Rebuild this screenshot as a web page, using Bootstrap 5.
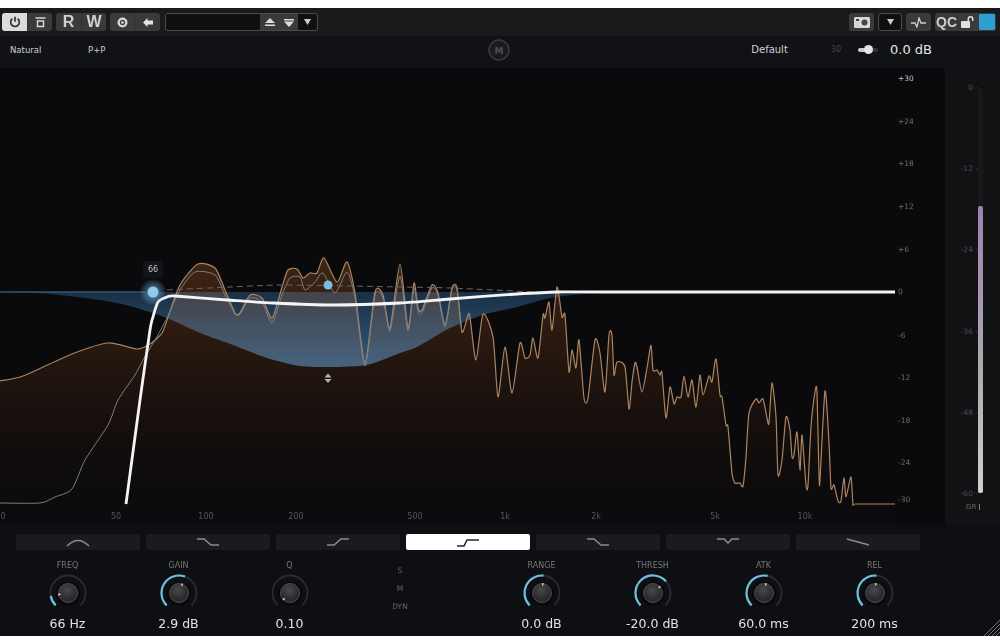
<!DOCTYPE html>
<html lang="en">
<head>
  <meta charset="UTF-8" />
  <title>Dynamic EQ</title>
  <link href="https://cdn.jsdelivr.net/npm/bootstrap@5.3.3/dist/css/bootstrap.min.css" rel="stylesheet" />
  <style>
    html, body { height: 100%; background: #fff; overflow: hidden; }
    body { font-family: "DejaVu Sans", sans-serif; }
    .plugin { margin-top: 8px; height: 628px; background: #0e0f12; position: relative; overflow: hidden; }

    /* top toolbar */
    .tool-bar { height: 28px; background: #1a1a1c; padding: 5px 4px 0 2px; }
    .tool-group { display: flex; height: 18px; border-radius: 3px; background: #3a3a3d; overflow: hidden; }
    .tool-btn { width: 25px; height: 18px; padding: 0; border: 0; border-radius: 0; background: transparent; color: #d0d0d0; display: flex; align-items: center; justify-content: center; font: 700 16px "Liberation Sans", sans-serif; }
    .tool-btn.is-on { background: #dcdcdc; color: #333; }
    .tool-btn + .tool-btn { border-left: 1px solid #333336; }
    .tool-btn.qc-text { width: 23px; font-size: 14px; }
    .tool-btn.qc-lock { width: 18px; }
    .preset-box { display: flex; width: 153px; height: 18px; margin-left: 5px; border: 1px solid #4a4a4c; border-radius: 3px; background: #3a3a3d; overflow: hidden; }
    .preset-name { width: 95px; background: #101012; }
    .preset-box .tool-btn { width: 19px; height: 16px; border: 0; }
    .preset-box .tool-drop { background: #101012; color: #ccc; }
    .drop-box { width: 24px; height: 18px; border: 1px solid #4a4a4c; border-radius: 3px; background: #101012; display: flex; align-items: center; justify-content: center; }
    .qc-chip { width: 16px; height: 16px; margin: 1px 1px 1px 3px; background: #2d9fd0; border-radius: 1px; }

    /* second bar */
    .sub-bar { height: 32px; padding-bottom: 4px; background: #111215; color: #d0d0d0; font-size: 8.5px; line-height: 12px; position: relative; }
    .sub-natural { margin-left: 10px; width: 78px; }
    .sub-badge { position: absolute; left: 488px; top: 3px; }
    .sub-default { font-size: 10px; margin-right: 43px; }
    .sub-range { color: #464648; font-size: 8px; margin-right: 17px; }
    .gain-slider { width: 20px; height: 4px; margin-right: 12px; border-radius: 2px; background: linear-gradient(90deg, #ccc 60%, #333 60%); position: relative; }
    .gain-thumb { position: absolute; left: 6px; top: -3px; width: 9px; height: 9px; border-radius: 50%; background: #e4e4e4; }
    .sub-gain { font-size: 13px; margin-right: 68px; color: #e4e4e4; }

    /* graph and meter */
    .graph-svg { display: block; width: 945px; height: 457px; background: #0a0a0d; }
    .soft-line { filter: blur(.3px); }
    .db-label { font-size: 7.5px; fill: #6c6c70; }
    .freq-label { font-size: 8px; fill: #55555a; text-anchor: middle; }
    .gr-meter { width: 55px; height: 457px; background: #111214; }
    .gr-scale { width: 33px; height: 416px; margin-top: 15px; color: #4c4c50; font-size: 7.5px; line-height: 10px; text-align: right; }
    .gr-track { width: 5px; height: 405px; margin-top: 20px; background: #18191b; display: flex; align-items: flex-end; }
    .gr-fill { width: 100%; border-radius: 2px; background: linear-gradient(180deg, #9a84ad 0%, #a898b5 35%, #aaaaaa 55%, #d0d0d0 100%); }
    .gr-name { position: absolute; left: 966px; top: 494px; font-size: 7px; color: #6a6a6e; }
    .gr-mark { position: absolute; left: 979px; top: 496px; width: 1px; height: 6px; background: #a5703c; }

    /* filter type tabs */
    .band-row { gap: 6px; padding: 9px 0 0 16px; }
    .band-tab { width: 124px; height: 16px; padding: 0; border: 0; border-radius: 2px; background: #1a1b1f; display: flex; align-items: center; justify-content: center; }
    .band-tab svg { stroke: #8c8c90; }
    .band-tab.is-on { background: #fff; }
    .band-tab.is-on svg { stroke: #222; }

    /* knobs */
    .knob-row { padding: 11px 0 0 12px; }
    .knob-cell { width: 111px; text-align: center; }
    .knob-name { font-size: 8px; line-height: 10px; color: #77777b; }
    .knob-dial { display: block; margin: 2px auto 0; }
    .knob-value { font-size: 12.5px; line-height: 16px; color: #e2e2e2; margin-top: 3px; }
    .mode-col { width: 110px; margin-right: 31px; padding-top: 1px; text-align: center; font-size: 7.5px; line-height: 18px; color: #66666a; }
    .size-grip { position: absolute; right: 0; bottom: 0; }
  </style>
</head>
<body>
  <div class="plugin">

    <!-- Toolbar -->
    <div class="tool-bar d-flex align-items-start">
      <div class="tool-group">
        <button class="btn tool-btn is-on"><svg width="12" height="12" viewBox="0 0 12 12" fill="none" stroke="#333" stroke-width="1.7"><path d="M3.4 2.8a4.3 4.3 0 1 0 5.2 0M6 .8v5"/></svg></button>
        <button class="btn tool-btn"><svg width="11" height="11" viewBox="0 0 11 11" fill="none" stroke="#d8d8d8" stroke-width="1.5"><path d="M.5 1h10M2.500 4h6v5.500h-6z"/></svg></button>
      </div>
      <div class="tool-group ms-1">
        <button class="btn tool-btn">R</button>
        <button class="btn tool-btn">W</button>
      </div>
      <div class="tool-group ms-1">
        <button class="btn tool-btn"><svg width="11" height="11" viewBox="0 0 11 11"><circle cx="5.500" cy="5.500" r="5" fill="#d8d8d8"/><circle cx="5.500" cy="5.500" r="2" fill="none" stroke="#444" stroke-width="1.300"/></svg></button>
        <button class="btn tool-btn"><svg width="10" height="9" viewBox="0 0 10 9" fill="#e4e4e4"><path d="M0 4.500 4.500 0v2.500H10v4H4.500V9z"/></svg></button>
      </div>
      <div class="preset-box">
        <div class="preset-name"></div>
        <button class="btn tool-btn"><svg width="10" height="9" viewBox="0 0 10 9" fill="#ddd"><path d="M5 0l5 5H0zM0 6.500h10V8H0z"/></svg></button>
        <button class="btn tool-btn"><svg width="10" height="9" viewBox="0 0 10 9" fill="#ddd"><path d="M0 1h10V2.500H0zM0 3.500h10L5 9z"/></svg></button>
        <button class="btn tool-btn tool-drop"><svg width="7" height="6" viewBox="0 0 7 6" fill="#ccc"><path d="M0 0h7L3.500 6z"/></svg></button>
      </div>
      <div class="ms-auto d-flex">
        <div class="tool-group"><button class="btn tool-btn"><svg width="16" height="11" viewBox="0 0 16 11"><rect width="16" height="11" rx="1.500" fill="#d8d8d8"/><circle cx="10.500" cy="5.500" r="3" fill="#444"/><rect x="2" y="2" width="3" height="2" fill="#444"/></svg></button></div>
        <div class="drop-box ms-1"><svg width="7" height="6" viewBox="0 0 7 6" fill="#ccc"><path d="M0 0h7L3.500 6z"/></svg></div>
        <div class="tool-group ms-1"><button class="btn tool-btn"><svg width="15" height="11" viewBox="0 0 15 11" fill="none" stroke="#d0d0d0" stroke-width="1.300"><path d="M0 6h4l2 4 2-9 2 5h5"/></svg></button></div>
        <div class="tool-group ms-1">
          <button class="btn tool-btn qc-text">QC</button>
          <button class="btn tool-btn qc-lock"><svg width="14" height="12" viewBox="0 0 14 12" fill="#e0e0e0"><rect y="5" width="9" height="7" rx="1"/><path d="M6.500 5V3a3 3 0 0 1 6 0v2h-1.500V3a1.500 1.500 0 0 0-3 0v2z"/></svg></button>
          <div class="qc-chip"></div>
        </div>
      </div>
    </div>

    <!-- Second bar -->
    <div class="sub-bar d-flex align-items-center">
      <span class="sub-natural">Natural</span>
      <span>P+P</span>
      <svg class="sub-badge" width="22" height="22" viewBox="0 0 22 22"><circle cx="11" cy="11" r="10" fill="#1a1b1e" stroke="#3c3c40" stroke-width="1.500"/><text x="11" y="14.500" font-size="9" font-weight="700" fill="#4c4c50" text-anchor="middle">M</text></svg>
      <div class="ms-auto d-flex align-items-center">
        <span class="sub-default">Default</span>
        <span class="sub-range">30</span>
        <div class="gain-slider"><div class="gain-thumb"></div></div>
        <span class="sub-gain">0.0 dB</span>
      </div>
    </div>

    <!-- Graph and gain reduction meter -->
    <div class="d-flex">
      <svg class="graph-svg" viewBox="0 68 945 457">
        <defs>
          <linearGradient id="spectrumFill" gradientUnits="userSpaceOnUse" x1="0" y1="260" x2="0" y2="505">
            <stop offset="0" stop-color="#6a3c1c" stop-opacity=".55"/>
            <stop offset=".4" stop-color="#3a2010" stop-opacity=".55"/>
            <stop offset="1" stop-color="#1c100a" stop-opacity=".1"/>
          </linearGradient>
          <linearGradient id="eqFill" gradientUnits="userSpaceOnUse" x1="0" y1="290" x2="0" y2="368">
            <stop offset="0" stop-color="#10263a"/>
            <stop offset="1" stop-color="#2a5676"/>
          </linearGradient>
          <radialGradient id="nodeHalo">
            <stop offset=".4" stop-color="#6fb4da" stop-opacity=".5"/>
            <stop offset="1" stop-color="#6fb4da" stop-opacity=".05"/>
          </radialGradient>
        </defs>
        <path id="spectrumArea" fill="url(#spectrumFill)"/>
        <path id="eqArea" fill="url(#eqFill)" style="mix-blend-mode:screen"/>
        <path id="spectrumLine" class="soft-line" fill="none" stroke="#ab8460" stroke-width="1.200"/>
        <path id="postLine" class="soft-line" fill="none" stroke="#7c7f83" stroke-width="1"/>
        <path id="dashLine" fill="none" stroke="#66676a" stroke-width="1" stroke-dasharray="6 4"/>
        <path id="eqLine" class="soft-line" fill="none" stroke="#f4f4f4" stroke-width="2.800"/>
        <path d="M0 292H145" stroke="#2f5872" stroke-width="1.500"/>

        <rect x="143" y="261" width="20" height="17" rx="2" fill="#131417"/>
        <text x="153" y="272" font-size="8" fill="#c0c0c0" text-anchor="middle">66</text>
        <circle cx="153" cy="292" r="13" fill="url(#nodeHalo)"/>
        <circle cx="153" cy="292" r="5.500" fill="#8ecbea"/>
        <circle cx="328" cy="285" r="4.500" fill="#77bde2"/>
        <path d="M328 373.500l3.500 4h-7zM328 383l3.500-4h-7z" fill="#b4b4b4"/>

        <g class="db-label">
          <text x="898" y="81" style="fill:#c4c4c4">+30</text>
          <text x="898" y="124">+24</text>
          <text x="898" y="166">+18</text>
          <text x="898" y="209">+12</text>
          <text x="898" y="252">+6</text>
          <text x="898" y="294">0</text>
          <text x="898" y="338">-6</text>
          <text x="898" y="380">-12</text>
          <text x="898" y="423">-18</text>
          <text x="898" y="465">-24</text>
          <text x="898" y="502">-30</text>
        </g>
        <g class="freq-label">
          <text x="3" y="519">0</text>
          <text x="116" y="519">50</text>
          <text x="206" y="519">100</text>
          <text x="296" y="519">200</text>
          <text x="415" y="519">500</text>
          <text x="505" y="519">1k</text>
          <text x="596" y="519">2k</text>
          <text x="715" y="519">5k</text>
          <text x="805" y="519">10k</text>
        </g>
      </svg>
      <div class="gr-meter d-flex">
        <div class="gr-scale d-flex flex-column justify-content-between">
          <span>0 -</span><span>-12 -</span><span>-24 -</span><span>-36 -</span><span>-48 -</span><span>-60 -</span>
        </div>
        <div class="gr-track"><div class="gr-fill" id="grFill"></div></div>
      </div>
      <span class="gr-name">GR</span>
      <span class="gr-mark"></span>
    </div>

    <!-- Filter type tabs -->
    <div class="band-row d-flex" id="bandRow"></div>

    <!-- Knobs -->
    <div class="knob-row d-flex" id="knobRow"></div>

    <svg class="size-grip" width="16" height="16" viewBox="0 0 16 16" stroke="#77777a" stroke-width="1"><path d="M0 16 16 0M4 16 16 4M8 16l8-8M12 16l4-4"/></svg>
  </div>

  <script src="https://cdn.jsdelivr.net/npm/bootstrap@5.3.3/dist/js/bootstrap.bundle.min.js"></script>
  <script>
    // Points read off the reference, in page coordinates
    const spectrum = [[0,381],[23,376],[72,354],[108,343],[137,349],[150,344],[162,333],[168,317],[180,285],[198,264],[215,268],[225,290],[235,313],[240,313],[250,295],[262,298],[272,318],[282,287],[288,270],[297,269],[303,278],[310,273],[317,273],[324,258],[337,282],[347,262],[355,293],[365,363],[375,292],[383,295],[390,328],[400,264],[408,328],[414,283],[418,308],[422,310],[432,285],[438,293],[445,325],[452,288],[457,288],[462,332],[468,315],[470,317],[476,360],[483,314],[493,337],[498,397],[505,347],[512,393],[520,343],[525,358],[530,355],[533,338],[538,358],[543,315],[545,318],[549,302],[552,330],[557,287],[562,317],[565,315],[569,372],[572,350],[576,368],[579,340],[584,398],[588,398],[595,340],[600,353],[605,392],[609,335],[612,335],[614,375],[617,362],[625,367],[629,409],[632,382],[635,363],[637,367],[642,392],[647,368],[651,345],[653,370],[657,370],[660,375],[662,373],[666,418],[670,387],[674,404],[677,397],[681,397],[684,376],[688,397],[692,380],[696,407],[700,375],[703,395],[709,376],[712,382],[716,359],[720,395],[722,397],[726,425],[728,427],[732,473],[735,483],[740,483],[743,486],[746,457],[749,413],[756,399],[759,403],[763,399],[767,418],[769,423],[772,383],[776,417],[778,475],[782,460],[786,417],[790,430],[792,457],[794,455],[797,432],[800,470],[802,435],[806,485],[808,485],[811,427],[815,392],[817,392],[819,475],[820,480],[825,391],[829,443],[831,488],[834,485],[838,501],[841,501],[844,478],[846,497],[851,477],[853,504],[856,504],[895,504]];
    const postEq = [[0,503],[40,503],[55,497],[72,489],[85,460],[108,425],[118,400],[135,375],[143,360],[155,340],[167,318],[180,290],[195,272],[215,275],[225,295],[235,314],[240,314],[250,298],[262,302],[272,323],[282,295],[290,278],[300,277],[305,290],[315,282],[323,273],[335,293],[347,272],[355,298],[365,366],[375,295],[383,298],[390,331],[400,276],[408,331],[414,288],[418,311],[422,313],[432,288],[438,295],[445,327],[452,290],[457,290],[462,333]];
    const eqBottom = [[0,292],[50,294],[100,300],[130,306],[167,318],[200,333],[233,345],[267,358],[300,366],[330,367],[367,365],[400,353],[417,347],[450,328],[483,315],[517,307],[550,298],[590,293]];
    const eqCurve = [[126,504],[140,400],[150,330],[153,317],[158,302],[167,297],[175,296],[227,300],[273,303],[333,305],[400,303],[450,299],[517,294],[557,292],[600,292],[895,292]];
    const dash = [[167,290],[230,287],[285,285],[400,287],[450,288],[553,293]];

    // Catmull-Rom through the points, keeps the peaks rounded
    function smoothPath(pts, tension = 0.12) {
      let d = `M${pts[0][0]} ${pts[0][1]}`;
      for (let i = 0; i < pts.length - 1; i++) {
        const p0 = pts[i - 1] || pts[i], p1 = pts[i], p2 = pts[i + 1], p3 = pts[i + 2] || p2;
        const c1x = p1[0] + (p2[0] - p0[0]) * tension, c1y = p1[1] + (p2[1] - p0[1]) * tension;
        const c2x = p2[0] - (p3[0] - p1[0]) * tension, c2y = p2[1] - (p3[1] - p1[1]) * tension;
        d += `C${c1x.toFixed(1)} ${c1y.toFixed(1)} ${c2x.toFixed(1)} ${c2y.toFixed(1)} ${p2[0]} ${p2[1]}`;
      }
      return d;
    }

    const spectrumD = smoothPath(spectrum);
    document.getElementById("spectrumLine").setAttribute("d", spectrumD);
    document.getElementById("spectrumArea").setAttribute("d", spectrumD + "V525H0Z");
    document.getElementById("postLine").setAttribute("d", smoothPath(postEq));
    document.getElementById("eqArea").setAttribute("d", smoothPath(eqBottom) + "L590 292H0Z");
    document.getElementById("eqLine").setAttribute("d", smoothPath(eqCurve));
    document.getElementById("dashLine").setAttribute("d", smoothPath(dash));
    document.getElementById("grFill").style.height = "287px";

    // Filter type tabs
    const bands = ["M1 10Q12-1 23 10", "M1 3H8L15 9H23", "M1 9H8L15 3H23", "M1 10H8L11 4H23", "M1 3H8L15 9H23", "M1 3H8L12 7L16 3H23", "M1 3L23 9"];
    document.getElementById("bandRow").innerHTML = bands.map((d, i) =>
      `<button class="btn band-tab${i === 3 ? " is-on" : ""}"><svg width="24" height="12" viewBox="0 0 24 12" fill="none" stroke-width="1.5"><path d="${d}"/></svg></button>`
    ).join("");

    // Knobs, angles in degrees from the top, sweep starts at -135
    const knobs = [
      { name: "FREQ", value: "66 Hz", angle: -100 },
      { name: "GAIN", value: "2.9 dB", angle: 20 },
      { name: "Q", value: "0.10", angle: -135 },
      { mode: true },
      { name: "RANGE", value: "0.0 dB", angle: 5 },
      { name: "THRESH", value: "-20.0 dB", angle: 48 },
      { name: "ATK", value: "60.0 ms", angle: 12 },
      { name: "REL", value: "200 ms", angle: 5 }
    ];

    function polar(r, deg) {
      const a = deg * Math.PI / 180;
      return `${(20 + r * Math.sin(a)).toFixed(2)} ${(20 - r * Math.cos(a)).toFixed(2)}`;
    }

    function arc(r, from, to) {
      const large = to - from > 180 ? 1 : 0;
      return `M${polar(r, from)}A${r} ${r} 0 ${large} 1 ${polar(r, to)}`;
    }

    document.getElementById("knobRow").innerHTML = knobs.map(k => {
      if (k.mode) return `<div class="mode-col"><div>S</div><div>M</div><div>DYN</div></div>`;
      const sweep = k.angle > -135 ? `<path d="${arc(17.5, -135, k.angle)}" stroke="#6cc0de" stroke-width="2.2"/>` : "";
      return `
        <div class="knob-cell">
          <div class="knob-name">${k.name}</div>
          <svg class="knob-dial" width="40" height="40" viewBox="0 0 40 40" fill="none">
            <defs><radialGradient id="cap${k.name}" cx=".45" cy=".35"><stop offset="0" stop-color="#4a4a4d"/><stop offset="1" stop-color="#2a2a2c"/></radialGradient></defs>
            <path d="${arc(17.5, -135, 135)}" stroke="#2a2b2e" stroke-width="1.800"/>
            ${sweep}
            <circle cx="20" cy="21" r="12" fill="#0a0a0c"/>
            <circle cx="20" cy="20" r="9.500" fill="url(#cap${k.name})" stroke="#58585b" stroke-width=".8"/>
            <path d="M${polar(10, k.angle)}L${polar(7.5, k.angle)}" stroke="#d4d4d4" stroke-width="1.400"/>
          </svg>
          <div class="knob-value">${k.value}</div>
        </div>`;
    }).join("");
  </script>
</body>
</html>
